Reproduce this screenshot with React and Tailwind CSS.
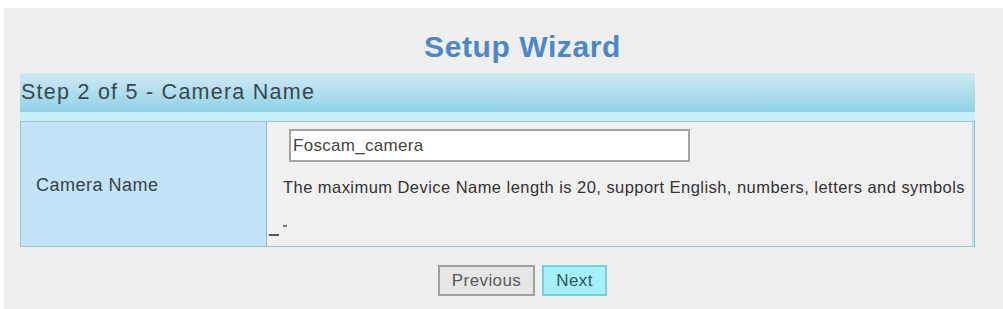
import React from 'react';

export default function App() {
  const font = { fontFamily: '"Liberation Sans", Arial, sans-serif' };

  return (
    <div className="w-[1003px] h-[309px] bg-white pt-[8px] pl-[4px] overflow-hidden" style={font}>
      <div className="h-full bg-[#efefef] pl-[16px]">
        {/* titolo */}
        <div className="w-[955px] h-[65px] pl-[50px] pt-[23px] text-center">
          <h1 className="text-[30px] leading-[32px] font-bold text-[#4c88c8] tracking-[0.6px]">
            Setup Wizard
          </h1>
        </div>

        <div className="w-[955px]">
          {/* barra del passo */}
          <div className="h-[39px] bg-gradient-to-b from-[#cfeaf4] to-[#8fd1e6] flex items-center pl-[1px]">
            <span className="text-[21.5px] text-[#38484f] tracking-[1.25px]">Step 2 of 5 - Camera Name</span>
          </div>
          <div className="h-[9px] bg-[#c8eef7]" />

          {/* tabella */}
          <div className="flex h-[126px] border border-[#9cc3cb]">
            <div className="w-[246px] shrink-0 bg-[#c3e3f6] border-r border-[#93b9c4] flex items-center pl-[15px] pt-[2px]">
              <span className="text-[18px] text-[#33444c] tracking-[0.5px]">Camera Name</span>
            </div>
            <div className="flex-1 bg-[#f0f0f0] border-r-2 border-[#b3e3ec] pt-[7px]">
              <div className="ml-[22px] w-[401px] h-[33px] bg-white border-2 border-[#a3a3a3] flex items-center pl-[2px]">
                <span className="text-[17px] text-[#444] tracking-[0.3px]">Foscam_camera</span>
              </div>
              <p className="ml-[16px] mt-[13px] text-[16.5px] leading-[24px] text-[#333] tracking-[0.45px]">
                The maximum Device Name length is 20, support English, numbers, letters and symbols
              </p>
              <div className="ml-[2px] mt-[26px] flex items-start gap-[4px]">
                <span className="block w-[10px] h-[2px] bg-[#555] mt-[9px]" />
                <span className="block w-[4px] h-[2px] bg-[#777] mt-[0px]" />
              </div>
            </div>
          </div>

          {/* pulsanti */}
          <div className="pl-[50px] pt-[18px] flex justify-center gap-[7px]">
            <button className="w-[97px] h-[31px] bg-[#e6e6e6] border-2 border-[#a0a0a0] text-[17px] tracking-[0.4px] text-[#5a5a5a]">
              Previous
            </button>
            <button className="w-[65px] h-[31px] bg-[#a6f0fb] border-2 border-[#78cfdc] text-[17px] tracking-[0.4px] text-[#2f5660]">
              Next
            </button>
          </div>
        </div>
      </div>
    </div>
  );
}
